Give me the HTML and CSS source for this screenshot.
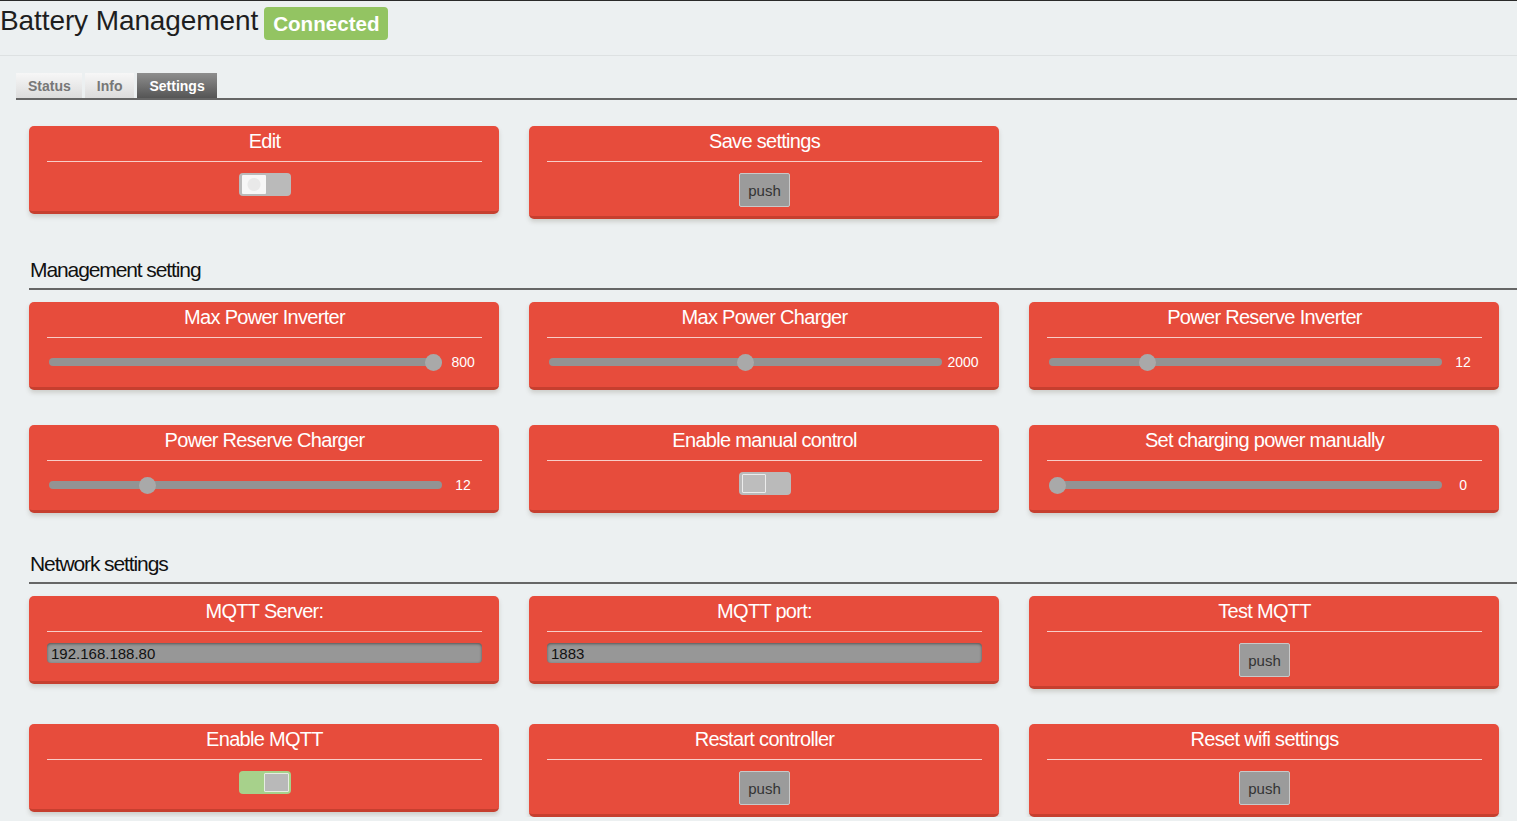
FILE: index.html
```html
<!DOCTYPE html>
<html lang="en">
<head>
<meta charset="utf-8">
<title>Battery Management</title>
<link rel="stylesheet" href="styles.css">
</head>
<body>
<header class="topbar">
  <h1 class="app-title">Battery Management</h1>
  <span class="status-badge">Connected</span>
</header>

<nav class="tabs">
  <span class="tab">Status</span>
  <span class="tab">Info</span>
  <span class="tab tab-active">Settings</span>
</nav>

<main class="content">
  <section class="card-row first-row">
    <div class="card">
      <div class="card-title">Edit</div>
      <div class="card-rule"></div>
      <div class="card-body">
        <div class="toggle toggle-white"><span class="knob"></span></div>
      </div>
    </div>
    <div class="card">
      <div class="card-title">Save settings</div>
      <div class="card-rule"></div>
      <div class="card-body">
        <button class="push">push</button>
      </div>
    </div>
  </section>

  <h2 class="section-head">Management setting</h2>
  <section class="card-row">
    <div class="card">
      <div class="card-title">Max Power Inverter</div>
      <div class="card-rule"></div>
      <div class="card-body">
        <div class="slider-row"><input class="slider" type="range" min="0" max="800" value="800"><span class="slider-val">800</span></div>
      </div>
    </div>
    <div class="card">
      <div class="card-title">Max Power Charger</div>
      <div class="card-rule"></div>
      <div class="card-body">
        <div class="slider-row"><input class="slider" type="range" min="0" max="4000" value="2000"><span class="slider-val">2000</span></div>
      </div>
    </div>
    <div class="card">
      <div class="card-title">Power Reserve Inverter</div>
      <div class="card-rule"></div>
      <div class="card-body">
        <div class="slider-row"><input class="slider" type="range" min="0" max="50" value="12"><span class="slider-val">12</span></div>
      </div>
    </div>
    <div class="card">
      <div class="card-title">Power Reserve Charger</div>
      <div class="card-rule"></div>
      <div class="card-body">
        <div class="slider-row"><input class="slider" type="range" min="0" max="50" value="12"><span class="slider-val">12</span></div>
      </div>
    </div>
    <div class="card">
      <div class="card-title">Enable manual control</div>
      <div class="card-rule"></div>
      <div class="card-body">
        <div class="toggle toggle-off"><span class="knob"></span></div>
      </div>
    </div>
    <div class="card">
      <div class="card-title">Set charging power manually</div>
      <div class="card-rule"></div>
      <div class="card-body">
        <div class="slider-row"><input class="slider" type="range" min="0" max="2000" value="0"><span class="slider-val">0</span></div>
      </div>
    </div>
  </section>

  <h2 class="section-head">Network settings</h2>
  <section class="card-row">
    <div class="card">
      <div class="card-title">MQTT Server:</div>
      <div class="card-rule"></div>
      <div class="card-body">
        <input class="text-in" type="text" value="192.168.188.80">
      </div>
    </div>
    <div class="card">
      <div class="card-title">MQTT port:</div>
      <div class="card-rule"></div>
      <div class="card-body">
        <input class="text-in" type="text" value="1883">
      </div>
    </div>
    <div class="card">
      <div class="card-title">Test MQTT</div>
      <div class="card-rule"></div>
      <div class="card-body">
        <button class="push">push</button>
      </div>
    </div>
    <div class="card">
      <div class="card-title">Enable MQTT</div>
      <div class="card-rule"></div>
      <div class="card-body">
        <div class="toggle toggle-on"><span class="knob"></span></div>
      </div>
    </div>
    <div class="card">
      <div class="card-title">Restart controller</div>
      <div class="card-rule"></div>
      <div class="card-body">
        <button class="push">push</button>
      </div>
    </div>
    <div class="card">
      <div class="card-title">Reset wifi settings</div>
      <div class="card-rule"></div>
      <div class="card-body">
        <button class="push">push</button>
      </div>
    </div>
  </section>
</main>
</body>
</html>
```

FILE: styles.css
```css
* { box-sizing: border-box; }

html, body {
  margin: 0;
  padding: 0;
  background: #ecf0f1;
  font-family: "Liberation Sans", Arial, sans-serif;
  color: #222;
}

.topbar {
  height: 56px;
  border-top: 1px solid #2a2a2a;
  border-bottom: 1px solid #dde1e2;
  display: flex;
  align-items: flex-start;
  gap: 6px;
}

.app-title {
  margin: 0;
  font-size: 28px;
  font-weight: normal;
  line-height: 40px;
  letter-spacing: -0.1px;
  color: #1e1e1e;
}

.status-badge {
  margin-top: 6px;
  height: 33px;
  line-height: 33px;
  padding: 0 8px 0 9px;
  border-radius: 4px;
  background: #93c462;
  color: #fff;
  font-weight: bold;
  font-size: 20.6px;
}

.tabs {
  margin: 17px 0 0 16px;
  height: 27px;
  border-bottom: 2px solid #666;
  display: flex;
  align-items: flex-end;
  gap: 3px;
}

.tab {
  height: 25px;
  line-height: 26px;
  padding: 0 12px;
  font-size: 14px;
  font-weight: bold;
  color: #777;
  background: linear-gradient(#f7f7f7, #dcdcdc);
}

.tab:first-child { padding-right: 11px; }

.tab-active {
  color: #fff;
  background: linear-gradient(#8e8e8e, #555);
}

.content {
  margin-left: 29px;
}

.card-row {
  display: flex;
  flex-wrap: wrap;
  align-items: flex-start;
  gap: 35px 30px;
}

.first-row {
  margin-top: 26px;
}

.section-head {
  margin: 38px 0 12px;
  padding: 0 0 5px 1px;
  font-size: 21px;
  line-height: 26px;
  font-weight: normal;
  letter-spacing: -1.1px;
  color: #111;
  border-bottom: 2px solid #666;
}

.card {
  width: 470px;
  padding: 0 17px 0 18px;
  background: #e74c3c;
  border-radius: 5px;
  border-bottom: 3px solid #c63f2f;
  box-shadow: 0 3px 4px rgba(120, 110, 100, 0.25);
  color: #fff;
}

.card-title {
  padding-top: 3px;
  font-size: 20px;
  line-height: 24px;
  letter-spacing: -0.7px;
  text-align: center;
}

.card-rule {
  margin-top: 8px;
  height: 1px;
  background: rgba(255, 255, 255, 0.72);
}

.card-body {
  padding-top: 11px;
  display: flex;
  flex-direction: column;
  align-items: center;
}

/* toggles */
.toggle {
  width: 52px;
  height: 23px;
  border-radius: 4px;
  background: #bababa;
  padding: 2px 2px 2px 3px;
  margin-bottom: 15px;
  display: flex;
}

.toggle .knob {
  width: 24px;
  height: 19px;
  border-radius: 1px;
}

.toggle-white .knob {
  background: radial-gradient(circle at 50% 50%, #e9e9e9 0 6px, #f7f7f7 7px);
}

.toggle-off .knob {
  background: #bdbdbd;
  border: 1px solid #ececec;
}

.toggle-on {
  background: #a7d18b;
  justify-content: flex-end;
  padding: 2px;
}

.toggle-on .knob {
  width: 25px;
  background: #b9b9b9;
  border: 1px solid #e6ede2;
}

/* push buttons */
.push {
  width: 51px;
  height: 34px;
  margin: 0 0 9px;
  padding: 0;
  border: 1px solid #c9c9c9;
  border-radius: 2px;
  background: #9b9b9b;
  color: #333;
  font-family: "Liberation Sans", Arial, sans-serif;
  font-size: 15px;
}

/* sliders */
.slider-row {
  align-self: stretch;
  height: 24px;
  margin-top: 1px;
  margin-bottom: 13px;
  display: flex;
  align-items: center;
}

.slider {
  -webkit-appearance: none;
  appearance: none;
  width: 395px;
  height: 17px;
  margin: 0 0 0 2px;
  padding: 0;
  background: transparent;
}

.slider::-webkit-slider-runnable-track {
  height: 8px;
  border-radius: 4px;
  background: #939393;
}

.slider::-webkit-slider-thumb {
  -webkit-appearance: none;
  appearance: none;
  width: 17px;
  height: 17px;
  margin-top: -4.5px;
  border-radius: 50%;
  background: #a9a9a9;
  border: none;
}

.slider-val {
  width: 40px;
  padding-left: 2px;
  text-align: center;
  font-size: 14px;
  color: #fff;
}

/* text inputs */
.text-in {
  align-self: stretch;
  height: 20px;
  margin: 0 0 18px;
  padding: 0 4px;
  border: none;
  border-radius: 4px;
  background: #979797;
  box-shadow: inset 0 1px 3px rgba(0, 0, 0, 0.45);
  color: #111;
  font-family: "Liberation Sans", Arial, sans-serif;
  font-size: 15px;
}
```
